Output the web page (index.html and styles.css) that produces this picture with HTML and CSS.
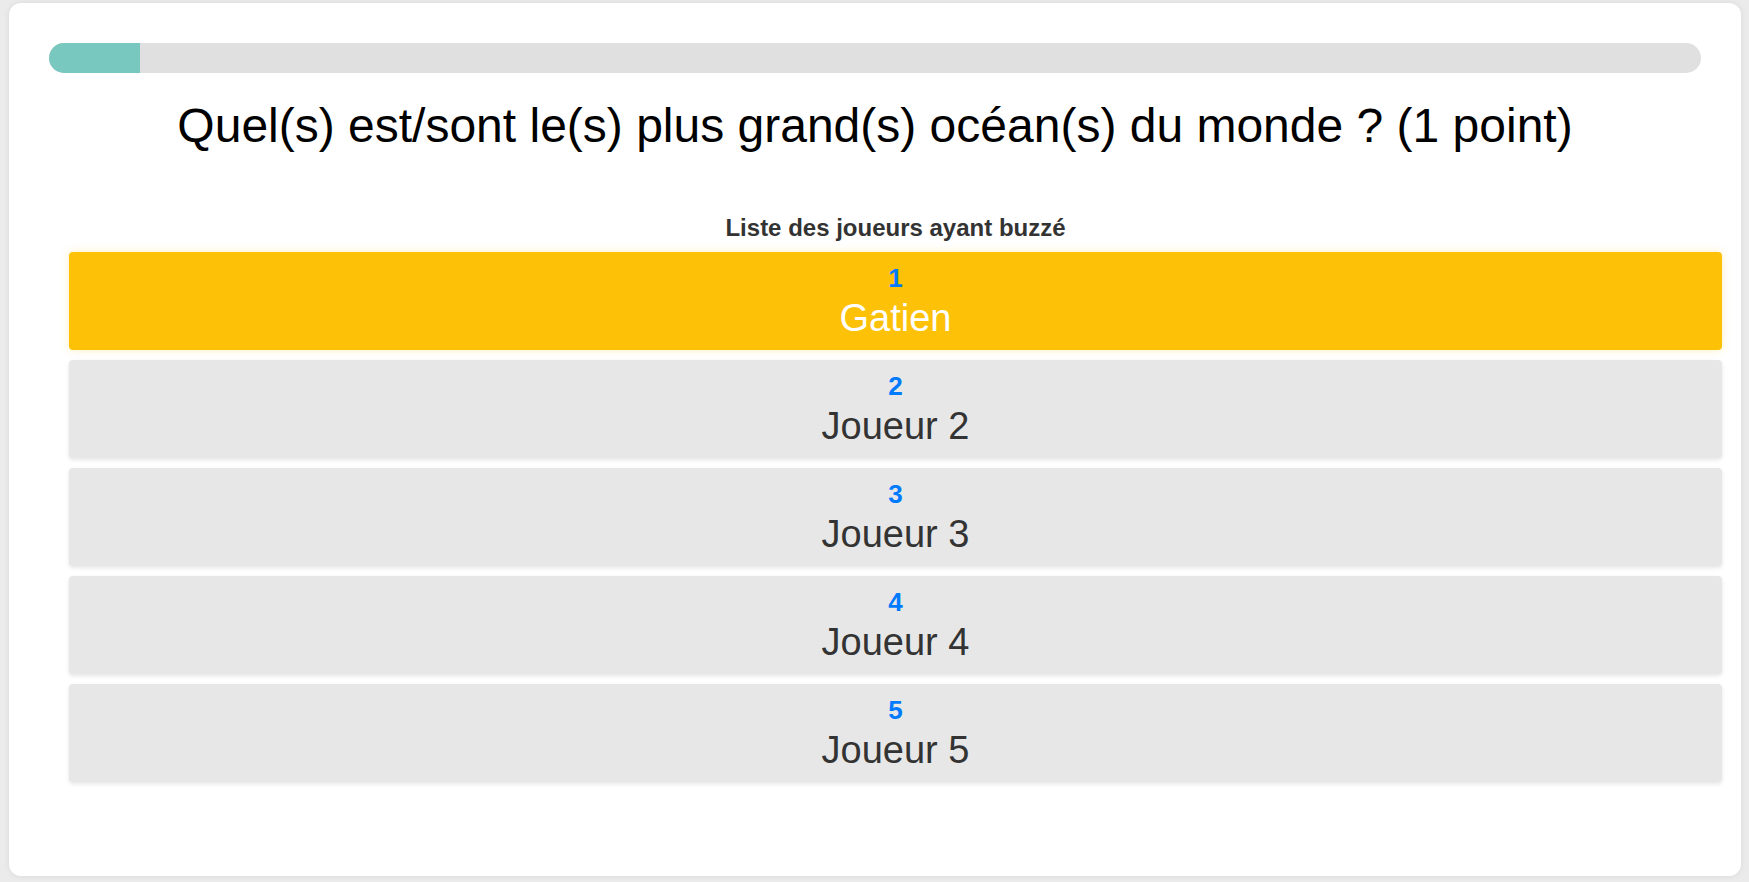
FILE: index.html
```html
<!DOCTYPE html>
<html lang="fr">
<head>
<meta charset="utf-8">
<title>Buzz</title>
<link rel="stylesheet" href="styles.css">
</head>
<body>
<div class="page">
  <div class="card">
    <div class="progress"><div class="progress-fill" style="width:5.5%"></div></div>
    <h1 class="question">Quel(s) est/sont le(s) plus grand(s) océan(s) du monde ? (1 point)</h1>
    <div class="buzz-list">
      <h2 class="buzz-title">Liste des joueurs ayant buzzé</h2>
      <ul class="players">
        <li class="player first"><span class="rank">1</span><span class="name">Gatien</span></li>
        <li class="player"><span class="rank">2</span><span class="name">Joueur 2</span></li>
        <li class="player"><span class="rank">3</span><span class="name">Joueur 3</span></li>
        <li class="player"><span class="rank">4</span><span class="name">Joueur 4</span></li>
        <li class="player"><span class="rank">5</span><span class="name">Joueur 5</span></li>
      </ul>
    </div>
  </div>
</div>
</body>
</html>
```
FILE: styles.css
```css
html, body {
  margin: 0;
  padding: 0;
  height: 100%;
}
body {
  background: #ebebeb;
  font-family: "Liberation Sans", Arial, sans-serif;
  color: #333;
}
.page {
  height: 100vh;
  box-sizing: border-box;
  padding: 3px 8px 6px 9px;
  display: flex;
}
.card {
  flex: 1;
  background: #fff;
  border-radius: 12px;
  box-shadow: 0 0 6px rgba(0, 0, 0, 0.08);
  padding: 40px 40px 0 40px;
  box-sizing: border-box;
}
.progress {
  height: 30px;
  background: #e0e0e0;
  border-radius: 15px;
  overflow: hidden;
}
.progress-fill {
  height: 100%;
  background: #78c8bf;
}
.question {
  margin: 25px 0 0 0;
  font-size: 48px;
  font-weight: normal;
  color: #000;
  text-align: center;
  line-height: normal;
}
.buzz-list {
  margin: 61px -21px 0 20px;
}
.buzz-title {
  margin: 0 0 11px 0;
  font-size: 24px;
  font-weight: bold;
  color: #333;
  text-align: center;
  line-height: 27px;
}
.players {
  list-style: none;
  margin: 0;
  padding: 0;
  display: flex;
  flex-direction: column;
  gap: 10px;
}
.player {
  display: flex;
  flex-direction: column;
  align-items: center;
  padding: 12px 0 10px 0;
  background: #e7e7e7;
  border-radius: 4px;
  box-shadow: 0 2px 4px rgba(0, 0, 0, 0.1);
}
.player.first {
  background: #fdc108;
  box-shadow: 0 0 8px rgba(253, 193, 8, 0.25);
}
.rank {
  font-size: 26px;
  line-height: 28px;
  font-weight: bold;
  color: #007bff;
}
.name {
  margin-top: 4px;
  font-size: 38px;
  line-height: 44px;
  color: #333;
}
.player.first .name {
  color: #fff;
}
```
